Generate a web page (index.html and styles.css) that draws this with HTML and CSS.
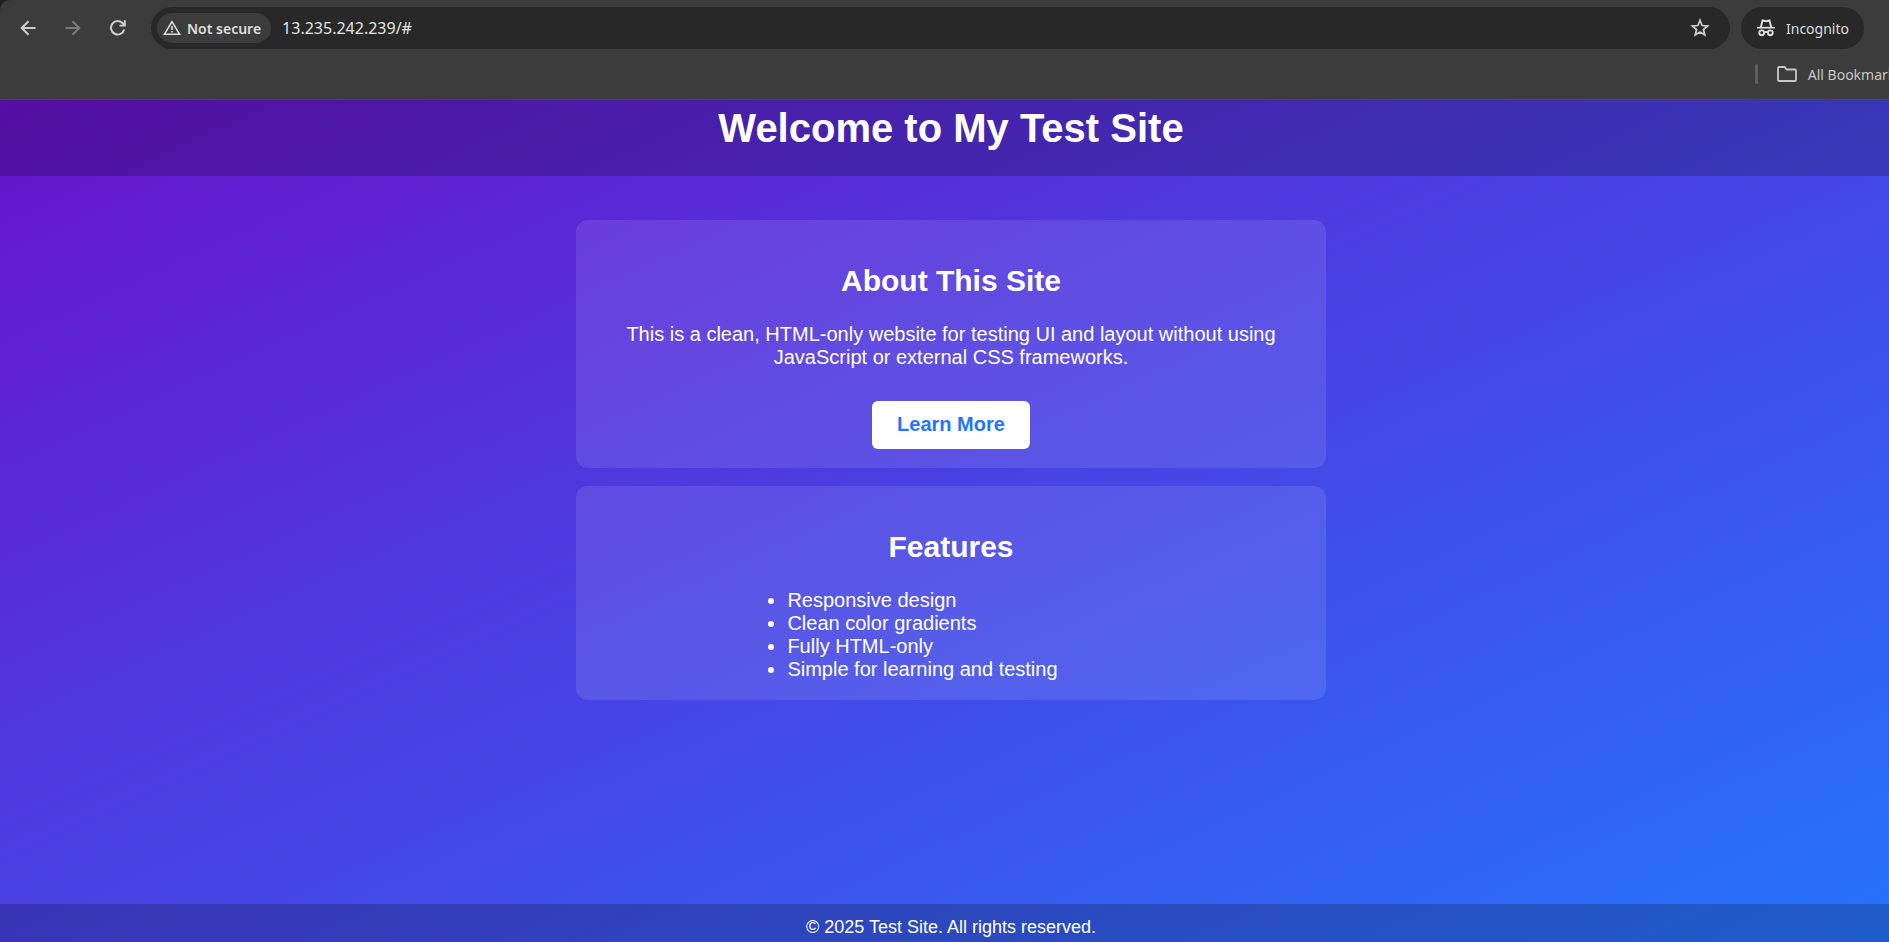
FILE: index.html
```html
<!DOCTYPE html>
<html lang="en">
<head>
<meta charset="utf-8">
<title>My Test Site</title>
<link rel="stylesheet" href="styles.css">
</head>
<body>
<div class="window">
  <div class="chrome">
    <div class="chrome-inner">
      <div class="toolbar">
        <div class="nav">
          <button class="icon-button" type="button" aria-label="Back">
            <svg width="16" height="16" viewBox="0 0 16 16" fill="none" stroke="currentColor" stroke-width="2"><path d="M15.5 8H2M8.5 1.2L1.7 8l6.8 6.8"/></svg>
          </button>
          <button class="icon-button icon-button-off" type="button" aria-label="Forward" disabled>
            <svg width="16" height="16" viewBox="0 0 16 16" fill="none" stroke="currentColor" stroke-width="2"><path d="M.5 8H14M7.5 1.2L14.3 8l-6.8 6.8"/></svg>
          </button>
          <button class="icon-button" type="button" aria-label="Reload">
            <svg width="16" height="16" viewBox="0 0 16 16"><path d="M14.2 9.4A6.7 6.7 0 1 1 12.9 3.5L14.5 5.2" fill="none" stroke="currentColor" stroke-width="2"/><path d="M15.8.3v6.300H9.500V4.800h4.400V.3z" fill="currentColor"/></svg>
          </button>
        </div>
        <div class="omnibox">
          <button class="chip" type="button">
            <svg width="18" height="16" viewBox="0 0 18 16"><path d="M9 1.700L1.500 14.200h15z" fill="none" stroke="currentColor" stroke-width="1.600"/><path d="M8.200 6h1.600v4H8.200zM8.200 11h1.600v1.600H8.200z" fill="currentColor"/></svg>
            Not secure
          </button>
          <input class="url" type="text" value="13.235.242.239/#" aria-label="Address">
          <button class="star" type="button" aria-label="Bookmark this page">
            <svg width="20" height="20" viewBox="0 0 20 20" fill="none" stroke="currentColor" stroke-width="1.700"><path d="M10 2.300l2.100 5.200 5.600.4-4.300 3.600 1.400 5.500L10 14l-4.800 3 1.400-5.500-4.300-3.600 5.600-.4z"/></svg>
          </button>
        </div>
        <button class="profile" type="button">
          <svg width="18" height="18" viewBox="0 0 18 18" fill="none" stroke="currentColor"><path d="M0 8.700h18" stroke-width="1.700"/><path d="M3.800 8.500L5.500 1.500 9 2.300l3.500-.8 1.700 7" stroke-width="1.900"/><circle cx="4.700" cy="13.800" r="2.400" stroke-width="1.900"/><circle cx="13.300" cy="13.800" r="2.400" stroke-width="1.900"/><path d="M7 13.500q2-1.200 4 0" stroke-width="1.700"/></svg>
          Incognito
        </button>
      </div>
      <div class="bookmarks">
        <span class="separator"></span>
        <button class="folder" type="button">
          <svg width="20" height="16" viewBox="0 0 20 16" fill="none" stroke="currentColor" stroke-width="1.800"><path d="M2 1h5.500l2.200 2.500H18a1 1 0 0 1 1 1V14a1 1 0 0 1-1 1H2a1 1 0 0 1-1-1V2a1 1 0 0 1 1-1z"/></svg>
          All Bookmarks
        </button>
      </div>
    </div>
  </div>
  <div class="page">
    <header class="header"><h1>Welcome to My Test Site</h1></header>
    <main class="content">
      <section class="card">
        <h2>About This Site</h2>
        <p>This is a clean, HTML-only website for testing UI and layout without using JavaScript or external CSS frameworks.</p>
        <a class="button" href="#">Learn More</a>
      </section>
      <section class="card">
        <h2>Features</h2>
        <ul>
          <li>Responsive design</li>
          <li>Clean color gradients</li>
          <li>Fully HTML-only</li>
          <li>Simple for learning and testing</li>
        </ul>
      </section>
    </main>
    <footer class="footer">© 2025 Test Site. All rights reserved.</footer>
  </div>
</div>
</body>
</html>
```
FILE: styles.css
```css
* { box-sizing: border-box; }

body {
  margin: 0;
  overflow: hidden;
  font-family: "Liberation Sans", Arial, sans-serif;
}

/* The window runs slightly past the right edge of the view. */
.window {
  display: flex;
  flex-direction: column;
  min-height: 100vh;
  margin-right: -13px;
}

.chrome { background: #202124; }

.chrome-inner {
  height: 100px;
  background: #3c3c3c;
  border-bottom: 1px solid #4a4a4a;
  border-top-left-radius: 10px;
  font-family: "Noto Sans", "Open Sans", sans-serif;
  color: #dedede;
}

button {
  border: 0;
  padding: 0;
  background: none;
  color: inherit;
  font: inherit;
  display: flex;
  align-items: center;
  white-space: nowrap;
}

.toolbar {
  display: flex;
  align-items: center;
  gap: 11px;
  padding: 7px 38px 0 6px;
}

.nav { display: flex; gap: 1px; }

.icon-button {
  width: 44px;
  height: 42px;
  justify-content: center;
  color: #cfcfcf;
}
.icon-button-off { color: #7b7b7b; }

.omnibox {
  flex: 1;
  display: flex;
  align-items: center;
  height: 42px;
  padding: 0 20px 0 6px;
  border-radius: 21px;
  background: #282828;
}

.chip {
  height: 30px;
  padding: 0 10px 0 6px;
  gap: 6px;
  border-radius: 15px;
  background: #3c3c3c;
  font-size: 14px;
  font-weight: 600;
}

.url {
  flex: 1;
  min-width: 0;
  margin-left: 11px;
  padding: 0;
  border: 0;
  outline: 0;
  background: none;
  color: #e3e3e3;
  font: 16px "Noto Sans", "Open Sans", sans-serif;
}

.star { color: #cfcfcf; }

.profile {
  height: 42px;
  padding: 0 15px 0 16px;
  gap: 11px;
  border-radius: 21px;
  background: #282828;
  font-size: 14px;
}

.bookmarks {
  display: flex;
  justify-content: flex-end;
  align-items: center;
  gap: 19px;
  height: 50px;
}

.separator {
  width: 3px;
  height: 20px;
  border-radius: 2px;
  background: #5e5e5e;
}

.folder { gap: 11px; font-size: 14px; color: #c7c7c7; }

.page {
  flex: 1;
  display: flex;
  flex-direction: column;
  color: #fff;
  background: linear-gradient(to bottom right, #6a11cb, #2575fc) 0 -20px / 100% calc(100% + 28px) no-repeat;
}

.header {
  padding: 5px 25px 25px;
  background: rgba(0, 0, 0, 0.2);
  text-align: center;
}
.header h1 { margin: 0; font-size: 40px; line-height: 46px; }

.content {
  flex: 1;
  display: flex;
  flex-direction: column;
  align-items: center;
  gap: 18px;
  padding: 44px 25px;
  font-size: 20px;
  line-height: 23px;
}

.card {
  width: 100%;
  max-width: 750px;
  padding: 19px;
  border-radius: 12px;
  background: rgba(255, 255, 255, 0.1);
  text-align: center;
}
.card h2 { margin: 24px 0 25px; font-size: 30px; line-height: 35px; }
.card p { margin: 0 25px 32px; }
.card ul {
  width: 60%;
  margin: 0 auto;
  padding-left: 50px;
  text-align: left;
}

.button {
  display: block;
  width: fit-content;
  margin: 0 auto;
  padding: 12px 25px 13px;
  border-radius: 6px;
  background: #fff;
  color: #2575fc;
  font-weight: bold;
  text-decoration: none;
}

.footer {
  height: 38px;
  padding-top: 13px;
  background: rgba(0, 0, 0, 0.2);
  text-align: center;
  font-size: 18px;
  line-height: 21px;
}
```
